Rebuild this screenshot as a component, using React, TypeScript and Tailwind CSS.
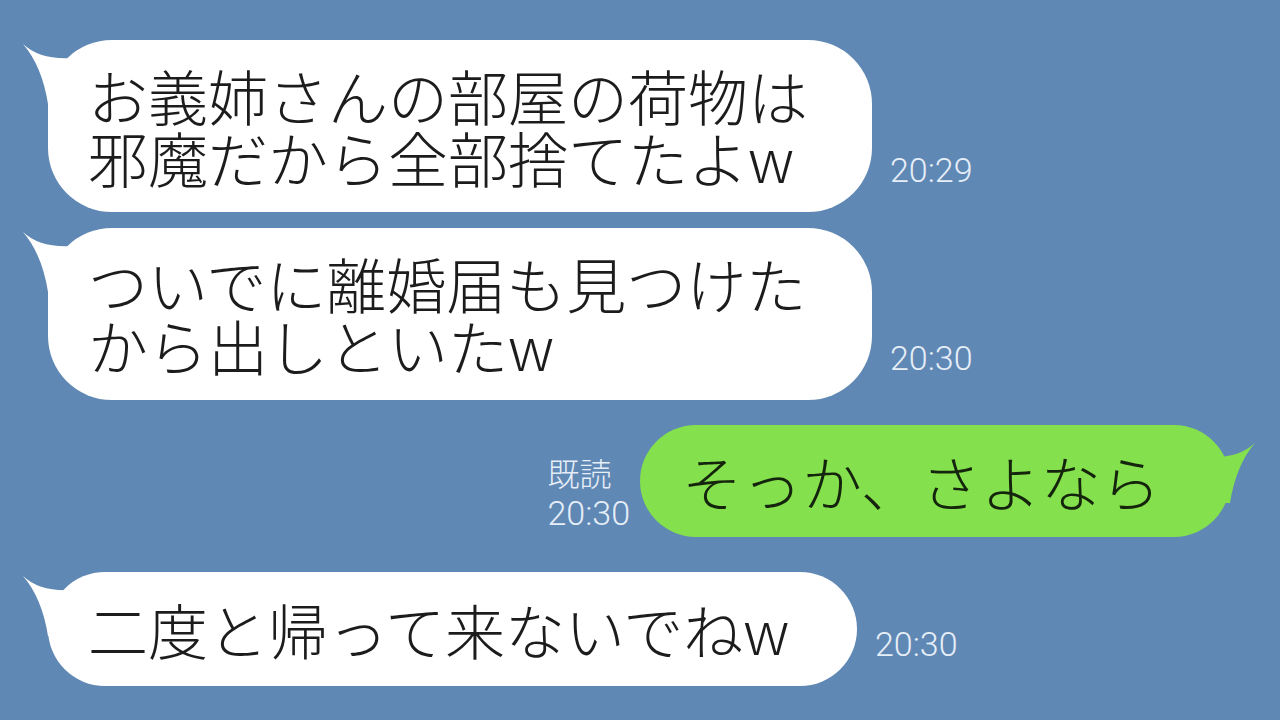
const jp = { fontFamily: '"Noto Sans CJK JP", "Noto Sans", sans-serif' };
const num = { fontFamily: 'Roboto, "Noto Sans", sans-serif' };

function Tail({ fill, className }: { fill: string; className: string }) {
  return (
    <svg width="60" height="70" viewBox="0 0 60 70" className={className}>
      <path d="M3 4 Q20 20 52 18 L52 64 L28 64 Q22 26 3 4 Z" fill={fill} />
    </svg>
  );
}

function Time({ t }: { t: string }) {
  return (
    <span style={num} className="text-[34px] font-light leading-[38px] text-[#e6eef8]">
      {t}
    </span>
  );
}

function Incoming({
  lines,
  width,
  height,
  time,
  mt,
}: {
  lines: string[];
  width: string;
  height: string;
  time: string;
  mt: string;
}) {
  return (
    <div className={`flex items-end gap-[18px] pl-[48px] ${mt}`}>
      <div
        className={`relative flex flex-col justify-center rounded-[64px] bg-white pl-[40px] ${width} ${height}`}
      >
        <Tail fill="#ffffff" className="absolute left-[-28px] top-0" />
        {lines.map((l) => (
          <p
            key={l}
            style={jp}
            className="relative text-[60px] font-light leading-[62px] text-[#1c1c1c]"
          >
            {l}
          </p>
        ))}
      </div>
      <div className="pb-[23px]">
        <Time t={time} />
      </div>
    </div>
  );
}

export default function App() {
  return (
    <div className="flex h-[720px] w-[1280px] flex-col overflow-hidden bg-[#6088b4]">
      <Incoming
        mt="mt-[40px]"
        width="w-[824px]"
        height="h-[172px]"
        lines={["お義姉さんの部屋の荷物は", "邪魔だから全部捨てたよw"]}
        time="20:29"
      />
      <Incoming
        mt="mt-[16px]"
        width="w-[824px]"
        height="h-[172px]"
        lines={["ついでに離婚届も見つけた", "から出しといたw"]}
        time="20:30"
      />

      <div className="mt-[25px] flex items-end justify-end gap-[10px] pr-[50px]">
        <div className="flex flex-col pb-[5px] text-[#e6eef8]">
          <span style={jp} className="text-[32px] font-light leading-[44px]">
            既読
          </span>
          <Time t="20:30" />
        </div>
        <div className="relative flex h-[112px] w-[590px] items-center rounded-[56px] bg-[#84e04c] pl-[42px]">
          <Tail
            fill="#84e04c"
            className="absolute right-[-28px] top-[14px] -scale-x-100"
          />
          <p
            style={jp}
            className="relative text-[60px] font-light leading-[62px] text-[#15240c]"
          >
            そっか、さよなら
          </p>
        </div>
      </div>

      <Incoming
        mt="mt-[35px]"
        width="w-[809px]"
        height="h-[114px]"
        lines={["二度と帰って来ないでねw"]}
        time="20:30"
      />
    </div>
  );
}
